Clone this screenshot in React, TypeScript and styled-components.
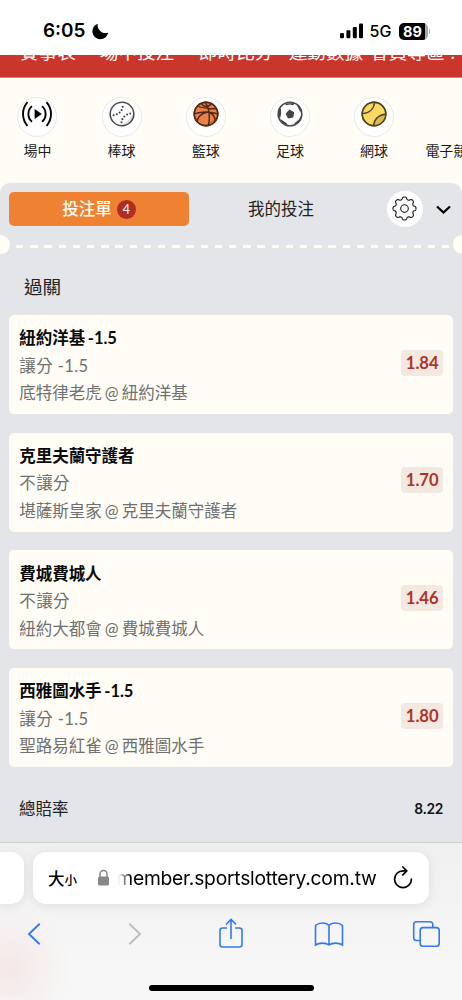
import React from 'react';
import styled, { createGlobalStyle } from 'styled-components';

const Global = createGlobalStyle`
  * { box-sizing: border-box; }
  body { margin: 0; background: #fff; overflow: hidden; }
  svg { display: block; flex: none; }
`;

const Screen = styled.div`
  width: 462px;
  height: 1000px;
  display: flex;
  flex-direction: column;
  overflow: hidden;
  background: #fffdf6;
  font-family: Lato, 'Noto Sans CJK TC', sans-serif;
  color: #222;
  white-space: nowrap;
`;

const StatusBar = styled.header`
  flex: none;
  height: 55px;
  padding: 7px 32px 0 43px;
  background: #fff;
  display: flex;
  align-items: center;
  color: #000;
  font-family: Inter, sans-serif;
`;
const Clock = styled.span`
  font-size: 18.9px;
  line-height: 22px;
  font-weight: 600;
  width: 48.5px;
`;
const StatusRight = styled.div`
  margin-left: auto;
  display: flex;
  align-items: center;
`;
const Network = styled.span`
  font-size: 16px;
  line-height: 18px;
  font-weight: 500;
  margin: 0 0 0 6px;
  width: 23px;
`;
const Battery = styled.span`
  width: 29px;
  height: 17px;
  margin-left: 6px;
  border-radius: 5px;
  background: linear-gradient(90deg, #000 26px, #aaa 26px);
  color: #fff;
  font-size: 14.5px;
  line-height: 17px;
  font-weight: 700;
  padding-left: 4.5px;
`;
const BatteryTip = styled.span`
  width: 1.5px;
  height: 5px;
  margin-left: 1px;
  border-radius: 0 2px 2px 0;
  background: #aaa;
`;

const TopNav = styled.nav`
  flex: none;
  height: 22.5px;
  overflow: hidden;
  background: #ca352c;
  border-bottom: 1px solid #dd8174;
  display: flex;
  padding-left: 20px;
  color: #fff;
  font-size: 18.6px;
  line-height: 27px;
`;
const NavItem = styled.span<{ $gap: number }>`
  margin-top: -16px;
  margin-right: ${(p) => p.$gap}px;
  height: 27px;
`;

const Sports = styled.section`
  flex: none;
  height: 105.5px;
  padding: 19px 0 0 0;
  display: flex;
  overflow: hidden;
`;
const Sport = styled.div<{ $shift?: number }>`
  flex: none;
  width: 84.15px;
  margin-left: ${(p) => p.$shift ?? 0}px;
  display: flex;
  flex-direction: column;
  align-items: center;
`;
const SportList = styled.div`
  display: flex;
  margin-left: -4.6px;
`;
const SportDisc = styled.div<{ $hidden?: boolean }>`
  width: 40px;
  height: 40px;
  border-radius: 50%;
  border: 1px solid #e8e8ea;
  background: #fff;
  padding-top: 3.5px;
  display: flex;
  justify-content: center;
  visibility: ${(p) => (p.$hidden ? 'hidden' : 'visible')};
`;
const SportLabel = styled.span`
  margin-top: 3px;
  font-size: 14px;
  line-height: 21px;
  color: #1c1c1c;
`;

const Slip = styled.main`
  flex: none;
  height: 659px;
  background: #e4e5e8;
  border-radius: 10px 10px 0 0;
`;
const Tabs = styled.div`
  height: 52px;
  padding: 0 11px 0 9px;
  display: flex;
  align-items: center;
`;
const Tab = styled.div<{ $active?: boolean }>`
  width: ${(p) => (p.$active ? 180 : 184)}px;
  height: 34px;
  border-radius: 5px;
  background: ${(p) => (p.$active ? '#ee8132' : 'transparent')};
  color: ${(p) => (p.$active ? '#fffdf6' : '#222')};
  font-size: 16.5px;
  font-weight: ${(p) => (p.$active ? 500 : 400)};
  line-height: 24px;
  display: flex;
  align-items: center;
  justify-content: center;
`;
const Count = styled.span`
  width: 19px;
  height: 19px;
  margin-left: 5px;
  border-radius: 50%;
  background: #b12c22;
  font-size: 12.5px;
  font-weight: 400;
  line-height: 19px;
  text-align: center;
`;
const SettingsButton = styled.div`
  width: 36px;
  height: 36px;
  margin-left: 13.5px;
  padding-bottom: 2px;
  border-radius: 50%;
  background: #fff;
  display: flex;
  align-items: center;
  justify-content: center;
`;
const Chevron = styled.svg`
  margin: 2px 0 0 13.5px;
`;
const Perforation = styled.div`
  height: 19px;
  display: flex;
  align-items: center;
  justify-content: space-between;
  overflow: hidden;
`;
const Notch = styled.span<{ $right?: boolean }>`
  flex: none;
  width: 9.5px;
  height: 19px;
  background: #fffdf6;
  border-radius: ${(p) => (p.$right ? '10px 0 0 10px' : '0 10px 10px 0')};
`;
const Dashes = styled.span`
  width: 434px;
  height: 3px;
  margin: 4px 0 0 4.5px;
  background: repeating-linear-gradient(90deg, #fffdf0 0 7.5px, transparent 7.5px 14.2px);
`;
const Heading = styled.h2`
  margin: 0;
  height: 61px;
  padding: 19px 0 0 24px;
  font-size: 18.6px;
  line-height: 28px;
  font-weight: 400;
  color: #222;
`;
const Bets = styled.div`
  padding: 0 9.3px;
  display: flex;
  flex-direction: column;
  gap: 18.7px;
`;
const Bet = styled.article`
  height: 99px;
  padding: 10.4px 9.5px 0 10px;
  border-radius: 5px;
  background: #fffdf6;
  display: flex;
  justify-content: space-between;
`;
const BetText = styled.div`
  display: flex;
  flex-direction: column;
`;
const Team = styled.strong`
  height: 27.4px;
  font-size: 16.5px;
  line-height: 27px;
  font-weight: 700;
  word-spacing: -1.2px;
  letter-spacing: -0.05px;
  color: #0a0a0a;
`;
const Detail = styled.span<{ $spaced?: boolean }>`
  height: 27.4px;
  font-size: 16.5px;
  line-height: 27px;
  letter-spacing: ${(p) => (p.$spaced ? 0.4 : 0)}px;
  word-spacing: ${(p) => (p.$spaced ? 0 : -1.2)}px;
  color: #707070;
`;
const Odds = styled.span`
  width: 42px;
  height: 26px;
  margin-top: 24.3px;
  border-radius: 4px;
  background: #f5e8e1;
  color: #aa3429;
  font-size: 16.6px;
  font-weight: 700;
  line-height: 26px;
  text-align: center;
`;
const Total = styled.div`
  padding: 30px 19px 0 19px;
  display: flex;
  justify-content: space-between;
  font-size: 16.5px;
  line-height: 24px;
`;
const TotalValue = styled.strong`
  font-family: Inter, sans-serif;
  font-size: 13.8px;
  letter-spacing: -0.35px;
  font-weight: 600;
  color: #111;
`;

const Browser = styled.footer`
  flex: none;
  height: 158px;
  border-top: 1px solid #cfcfd2;
  background: radial-gradient(ellipse 62px 60px at 10px 126px, rgba(245, 229, 228, 0.85), rgba(245, 231, 230, 0.5) 45%, rgba(245, 238, 237, 0)),
    linear-gradient(#f0f0f0, #f7f7f7 80%);
  display: flex;
  flex-direction: column;
`;
const AddressRow = styled.div`
  display: flex;
  gap: 9px;
  padding-top: 9px;
`;
const SideTab = styled.div`
  width: 24px;
  height: 52px;
  border-radius: 0 13px 13px 0;
  background: #fff;
  box-shadow: 0 2px 12px rgba(0, 0, 0, 0.09);
`;
const Address = styled.div`
  width: 396px;
  height: 52px;
  padding: 0 16px 0 15px;
  border-radius: 13px;
  background: #fff;
  box-shadow: 0 2px 12px rgba(0, 0, 0, 0.09);
  display: flex;
  align-items: center;
  color: #000;
`;
const SizeLabel = styled.span`
  width: 49px;
  font-size: 16.5px;
  font-weight: 500;
  small { font-size: 12.5px; }
`;
const Url = styled.span`
  width: 259px;
  margin-left: 7.5px;
  font-family: Inter, sans-serif;
  font-size: 19.3px;
  letter-spacing: -0.25px;
  display: flex;
  justify-content: flex-end;
  overflow: hidden;
  mask-image: linear-gradient(90deg, transparent, #000 13px);
`;
const Reload = styled.svg`
  margin: 0 0 2px auto;
`;
const Toolbar = styled.div`
  height: 60px;
  display: flex;
`;
const Tool = styled.div<{ $width: number }>`
  width: ${(p) => p.$width}px;
  display: flex;
  align-items: center;
  justify-content: center;
`;
const HomeBar = styled.div`
  width: 165px;
  height: 6px;
  margin: 21px 0 0 149px;
  border-radius: 3px;
  background: #000;
`;

const LiveIcon = () => (
  <svg width="30" height="26" viewBox="0 0 30 26" fill="none" stroke="#000" strokeWidth="1.9">
    <path d="M5.5 1.2C-0.5 8-0.5 18 5.5 24.8M24.5 1.2C30.5 8 30.5 18 24.5 24.8M10 5.3C5.2 9 5.2 17 10 20.7M20 5.3C24.8 9 24.8 17 20 20.7" />
    <path d="M12.6 8.1v9.8l7.2-4.9z" fill="#000" stroke="none" />
  </svg>
);
const BaseballIcon = () => (
  <svg width="26" height="26" viewBox="0 0 26 26" fill="none">
    <circle cx="13" cy="13" r="11.8" fill="#fff" />
    <path d="M24.5 11A11.8 11.8 0 0 1 9 24.1C17 23.5 22 18 24.5 11Z" fill="#dcdcdc" />
    <circle cx="13" cy="13" r="11.8" stroke="#4b4b4d" strokeWidth="1.5" />
    <path d="M4.6 14.2C9.8 13.5 13.4 9.8 13.8 5M12.5 21.3C13 16.5 17.5 12.7 21.6 12.5" stroke="#444" strokeWidth="2.1" strokeLinecap="round" strokeDasharray="0 3.3" />
  </svg>
);
const BasketballIcon = () => (
  <svg width="26" height="26" viewBox="0 0 26 26" fill="none" stroke="#522819" strokeWidth="1.45">
    <circle cx="13" cy="13" r="11.8" fill="#ed8048" />
    <path d="M24.5 13.5A11.8 11.8 0 0 1 9.5 24.2C17 22.7 21.5 19 24.5 13.5Z" fill="#c66637" stroke="none" />
    <circle cx="13" cy="13" r="11.8" />
    <path d="M4.5 5C8.5 7.5 17.5 7.5 23.7 7.8M1.3 12.8C8.5 10.6 16.5 10.2 24.8 13M12 1.3C16.5 7 17.3 17 15.4 24.5M14.8 11C8.5 12.5 4.7 16.2 4 20.3M15.8 11C20.2 12.8 22 16.4 22.3 20M8.4 2.3C10.5 6.2 15.2 7 18.4 2.5" />
  </svg>
);
const SoccerIcon = () => (
  <svg width="26" height="26" viewBox="0 0 26 26">
    <circle cx="13" cy="13" r="11.8" fill="#fff" stroke="#4b4b4d" strokeWidth="1.6" />
    <path d="M23 15A11 11 0 0 1 11 23.5C17 23 21 19 23 15Z" fill="#dcdcdc" />
    <path d="M12.4 8.6L17.2 11.2L16.2 16.4L11 17.4L8.6 12.8Z" fill="#444446" />
    <path d="M7 2.4L18.5 2L16 4.2L12.8 3.6L9.6 4.2ZM1.8 7.6L4 7.8L4.1 12L3.4 16.5L1.3 16ZM3.2 17.8L6.4 19.9L9.6 22.2L10.5 24.4C7 23.7 4.6 21.4 3.2 17.8ZM19.4 3.4L22.7 5.6L24.6 11L22.8 10.2L21.2 6.8ZM24.5 14L23 20L16.8 24.2L17.9 22L21.7 19Z" fill="#444446" />
  </svg>
);
const TennisIcon = () => (
  <svg width="26" height="26" viewBox="0 0 26 26" fill="none" stroke="#4d4420" strokeWidth="1.45">
    <circle cx="13" cy="13" r="11.8" fill="#fad963" />
    <path d="M24.7 12.5A11.8 11.8 0 0 1 12 24.8C13 18 18 13 24.7 12.5Z" fill="#d8bb57" stroke="none" />
    <circle cx="13" cy="13" r="11.8" />
    <path d="M1.3 12.6C8.2 12.1 13 7.8 13.6 1.2M12.5 24.8C13.2 18 18 13.7 24.8 13.2" />
  </svg>
);
const MoonIcon = () => (
  <svg width="17" height="17" viewBox="0 0 17 17">
    <path d="M5.6.7C4.8 6.4 10 11.4 16.2 9.8C15.2 13.6 12 16.2 8.3 16.2C3.9 16.2.4 12.7.4 8.3C.4 4.9 2.3 2 5.6.7Z" />
  </svg>
);
const SignalIcon = () => (
  <svg width="24" height="16" viewBox="0 0 24 16">
    <rect x="0" y="10" width="4" height="5.3" rx="1.2" />
    <rect x="6.4" y="7.3" width="4" height="8" rx="1.2" />
    <rect x="12.8" y="4" width="4" height="11.3" rx="1.2" />
    <rect x="19" y="0.5" width="4" height="14.8" rx="1.2" />
  </svg>
);
const gearPath = (() => {
  const pts: string[] = [];
  for (let i = 0; i <= 240; i++) {
    const a = (i / 240) * Math.PI * 2;
    const r = 10.3 + 1.25 * Math.tanh(1.6 * (Math.cos(8 * a) + 0.15));
    pts.push(`${(12.5 + r * Math.sin(a)).toFixed(2)} ${(12.5 - r * Math.cos(a)).toFixed(2)}`);
  }
  return `M${pts.join('L')}Z`;
})();
const GearIcon = () => (
  <svg width="25" height="25" viewBox="0 0 25 25" fill="none" stroke="#222" strokeWidth="1.15" strokeLinejoin="round">
    <path d={gearPath} />
    <circle cx="12.5" cy="12.5" r="3.8" />
  </svg>
);

const nav = [
  { text: '賽事表', gap: 24 },
  { text: '場中投注', gap: 24.6 },
  { text: '即時比分', gap: 15.6 },
  { text: '運動數據', gap: 7 },
  { text: '會員專區', gap: 6 },
  { text: '.', gap: 0 },
];
const sports = [
  { label: '場中', icon: <LiveIcon /> },
  { label: '棒球', icon: <BaseballIcon /> },
  { label: '籃球', icon: <BasketballIcon /> },
  { label: '足球', icon: <SoccerIcon /> },
  { label: '網球', icon: <TennisIcon /> },
];
const bets = [
  { team: '紐約洋基 -1.5', type: '讓分 -1.5', match: '底特律老虎 @ 紐約洋基', odds: '1.84' },
  { team: '克里夫蘭守護者', type: '不讓分', match: '堪薩斯皇家 @ 克里夫蘭守護者', odds: '1.70' },
  { team: '費城費城人', type: '不讓分', match: '紐約大都會 @ 費城費城人', odds: '1.46' },
  { team: '西雅圖水手 -1.5', type: '讓分 -1.5', match: '聖路易紅雀 @ 西雅圖水手', odds: '1.80' },
];

export default function App() {
  return (
    <Screen>
      <Global />
      <StatusBar>
        <Clock>6:05</Clock>
        <MoonIcon />
        <StatusRight>
          <SignalIcon />
          <Network>5G</Network>
          <Battery>89</Battery>
          <BatteryTip />
        </StatusRight>
      </StatusBar>
      <TopNav>
        {nav.map((n) => (
          <NavItem key={n.text} $gap={n.gap}>{n.text}</NavItem>
        ))}
      </TopNav>
      <Sports>
        <SportList>
          {sports.map((s) => (
            <Sport key={s.label}>
              <SportDisc>{s.icon}</SportDisc>
              <SportLabel>{s.label}</SportLabel>
            </Sport>
          ))}
          <Sport $shift={-4.8}>
            <SportDisc $hidden />
            <SportLabel>電子競技</SportLabel>
          </Sport>
        </SportList>
      </Sports>
      <Slip>
        <Tabs>
          <Tab $active>
            投注單<Count>4</Count>
          </Tab>
          <Tab>我的投注</Tab>
          <SettingsButton>
            <GearIcon />
          </SettingsButton>
          <Chevron width="15" height="10" viewBox="0 0 15 10" fill="none" stroke="#000" strokeWidth="2.3">
            <path d="M1 1.5L7.5 7.5L14 1.5" />
          </Chevron>
        </Tabs>
        <Perforation>
          <Notch />
          <Dashes />
          <Notch $right />
        </Perforation>
        <Heading>過關</Heading>
        <Bets>
          {bets.map((b) => (
            <Bet key={b.team}>
              <BetText>
                <Team>{b.team}</Team>
                <Detail $spaced>{b.type}</Detail>
                <Detail>{b.match}</Detail>
              </BetText>
              <Odds>{b.odds}</Odds>
            </Bet>
          ))}
        </Bets>
        <Total>
          <span>總賠率</span>
          <TotalValue>8.22</TotalValue>
        </Total>
      </Slip>
      <Browser>
        <AddressRow>
          <SideTab />
          <Address>
            <SizeLabel>大<small>小</small></SizeLabel>
            <svg width="13" height="18" viewBox="0 0 13 18">
              <rect x="1" y="7.5" width="11" height="9" rx="1.6" fill="#88888c" />
              <path d="M3 8V5a3.5 3.5 0 0 1 7 0v3" fill="none" stroke="#88888c" strokeWidth="1.5" />
            </svg>
            <Url>member.sportslottery.com.tw</Url>
            <Reload width="20" height="23" viewBox="0 0 20 23" fill="none" stroke="#000" strokeWidth="1.7" strokeLinecap="round" strokeLinejoin="round">
              <path d="M18.4 13.2A8.4 8.4 0 1 1 10 4.8H13.5M9.8 1L13.8 4.9L9.8 8.8" />
            </Reload>
          </Address>
        </AddressRow>
        <Toolbar>
          <Tool $width={68}>
            <svg width="16" height="24" viewBox="0 0 16 24" fill="none" stroke="#3478f6" strokeWidth="1.9">
              <path d="M13.7 1.8L3 12L13.7 22.2" />
            </svg>
          </Tool>
          <Tool $width={134}>
            <svg width="16" height="24" viewBox="0 0 16 24" fill="none" stroke="#bdbdbf" strokeWidth="1.9">
              <path d="M2.3 1.8L13 12L2.3 22.2" />
            </svg>
          </Tool>
          <Tool $width={58}>
            <svg width="26" height="32" viewBox="0 0 26 32" fill="none" stroke="#3478f6" strokeWidth="1.6">
              <path d="M9 10H4.5A2.5 2.5 0 0 0 2 12.5V26.5A2.5 2.5 0 0 0 4.5 29H21.5A2.5 2.5 0 0 0 24 26.5V12.5A2.5 2.5 0 0 0 21.5 10H17M13 21V1.5M8 6.5L13 1.5L18 6.5" />
            </svg>
          </Tool>
          <Tool $width={137}>
            <svg width="30" height="26" viewBox="0 0 30 26" fill="none" stroke="#3478f6" strokeWidth="1.6">
              <path d="M15 4.5V24M15 4.5C12 1.2 5 1.2 1.5 4.5V24C5 21.5 12 21.5 15 24C18 21.5 25 21.5 28.5 24V4.5C25 1.2 18 1.2 15 4.5Z" />
            </svg>
          </Tool>
          <Tool $width={59}>
            <svg width="29" height="28" viewBox="0 0 29 28" fill="none" stroke="#3478f6" strokeWidth="1.6">
              <path d="M8 20.5H4.5A2.8 2.8 0 0 1 1.7 17.7V4.5A2.8 2.8 0 0 1 4.5 1.7H18A2.8 2.8 0 0 1 20.8 4.5V7.5" />
              <rect x="8.2" y="7.6" width="19" height="18.7" rx="2.8" />
            </svg>
          </Tool>
        </Toolbar>
        <HomeBar />
      </Browser>
    </Screen>
  );
}
